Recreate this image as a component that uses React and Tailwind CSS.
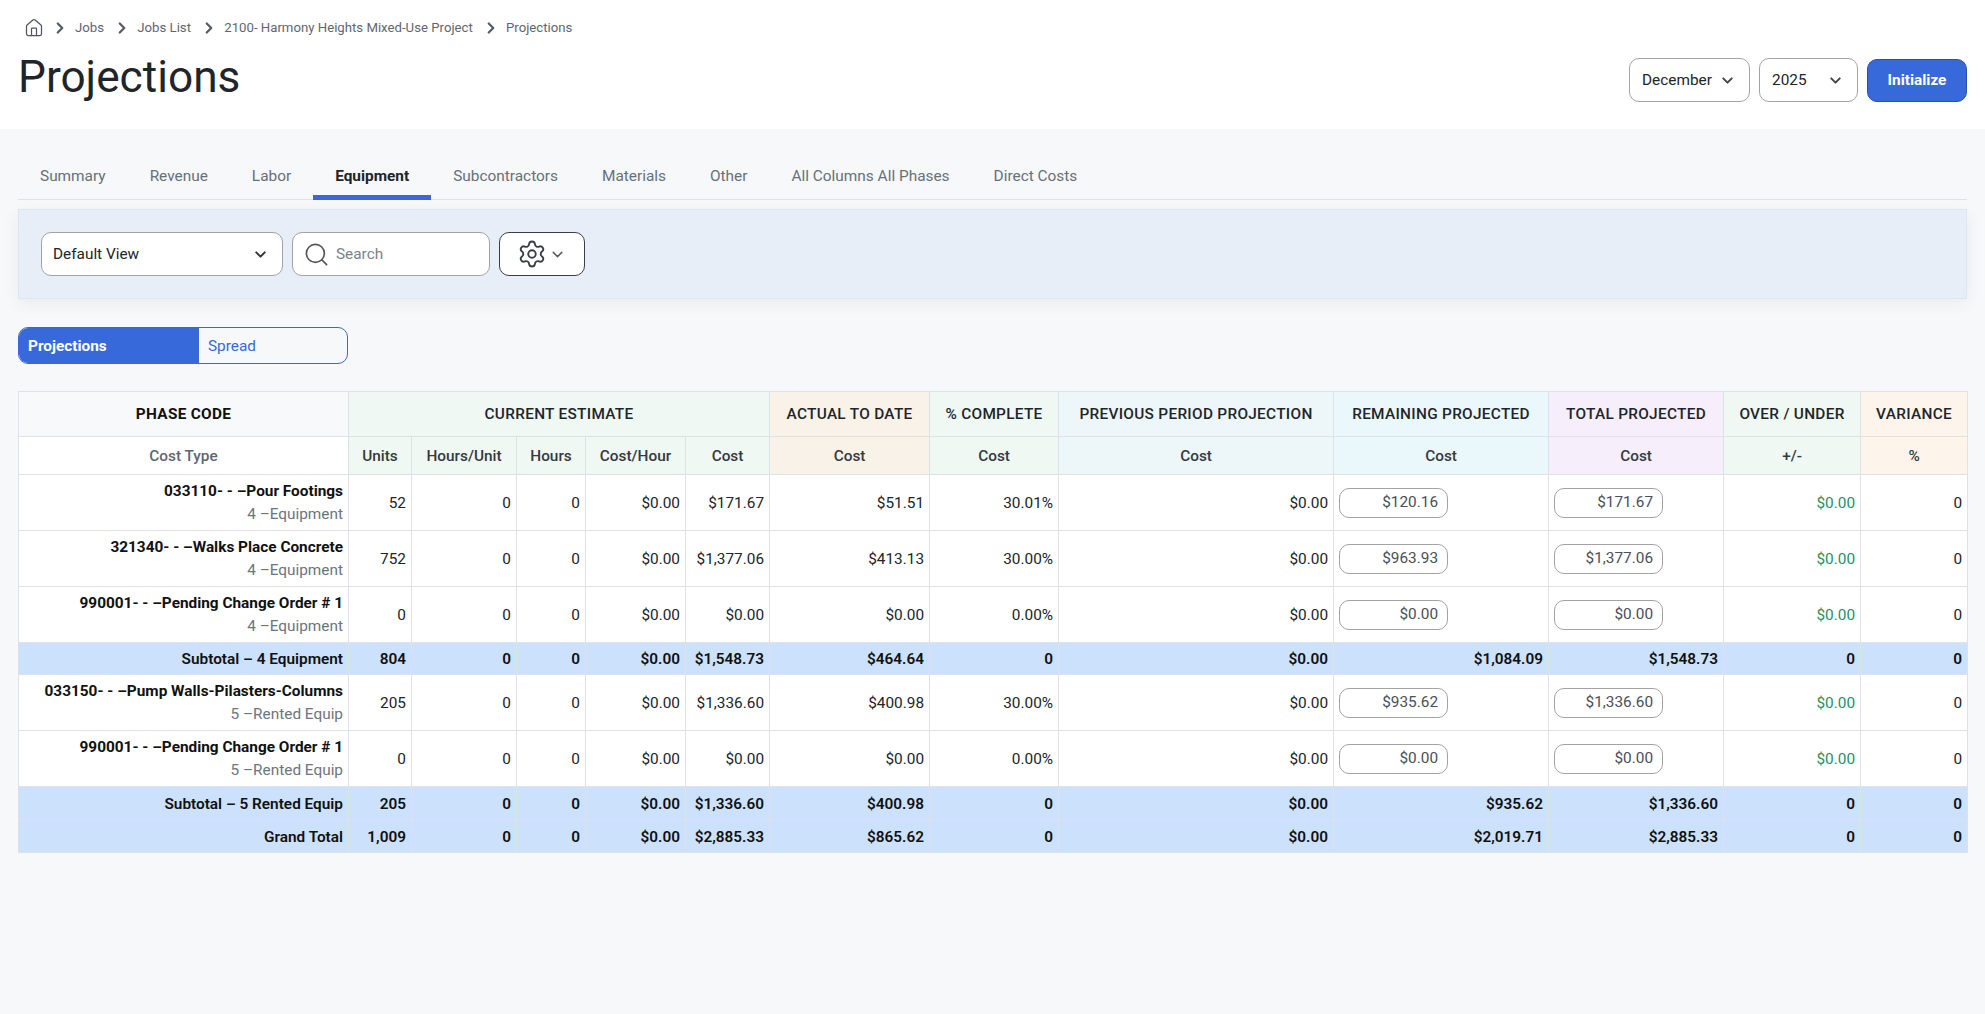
import React from "react";
import { ChevronDown, ChevronRight, House, Search, Settings } from "lucide-react";

const crumbs = ["Jobs", "Jobs List", "2100- Harmony Heights Mixed-Use Project", "Projections"];
const tabs = ["Summary", "Revenue", "Labor", "Equipment", "Subcontractors", "Materials", "Other", "All Columns All Phases", "Direct Costs"];

const rows = [
  { t: "row", name: "033110- - –Pour Footings", sub: "4 –Equipment", v: ["52", "0", "0", "$0.00", "$171.67", "$51.51", "30.01%", "$0.00", "$120.16", "$171.67"] },
  { t: "row", name: "321340- - –Walks Place Concrete", sub: "4 –Equipment", v: ["752", "0", "0", "$0.00", "$1,377.06", "$413.13", "30.00%", "$0.00", "$963.93", "$1,377.06"] },
  { t: "row", name: "990001- - –Pending Change Order # 1", sub: "4 –Equipment", v: ["0", "0", "0", "$0.00", "$0.00", "$0.00", "0.00%", "$0.00", "$0.00", "$0.00"] },
  { t: "sum", h: "h-[32px]", name: "Subtotal – 4 Equipment", v: ["804", "0", "0", "$0.00", "$1,548.73", "$464.64", "0", "$0.00", "$1,084.09", "$1,548.73", "0", "0"] },
  { t: "row", name: "033150- - –Pump Walls-Pilasters-Columns", sub: "5 –Rented Equip", v: ["205", "0", "0", "$0.00", "$1,336.60", "$400.98", "30.00%", "$0.00", "$935.62", "$1,336.60"] },
  { t: "row", name: "990001- - –Pending Change Order # 1", sub: "5 –Rented Equip", v: ["0", "0", "0", "$0.00", "$0.00", "$0.00", "0.00%", "$0.00", "$0.00", "$0.00"] },
  { t: "sum", h: "h-[33px]", name: "Subtotal – 5 Rented Equip", v: ["205", "0", "0", "$0.00", "$1,336.60", "$400.98", "0", "$0.00", "$935.62", "$1,336.60", "0", "0"] },
  { t: "sum", h: "h-[33px]", name: "Grand Total", v: ["1,009", "0", "0", "$0.00", "$2,885.33", "$865.62", "0", "$0.00", "$2,019.71", "$2,885.33", "0", "0"] },
];

const groupBase = "border border-[#dee2e6] text-[15.36px] tracking-[0.3px] uppercase text-center px-1 pt-[1px]";
const groupCls = groupBase + " font-medium text-[#212529]";
const subBase = "border border-[#dee2e6] text-[15.36px] font-medium text-center px-1 pt-[3px]";
const subCls = subBase + " text-[#343a40]";
const cell = "border border-[#dee2e6] text-right px-[5px] text-[15.36px] pt-[3px]";

function Box({ className, children }) {
  return <div className={"flex items-center bg-white border rounded-[10px] h-[44px] " + className}>{children}</div>;
}

function Input({ value }) {
  return (
    <div className="w-[109px] h-[30px] -mt-[3px] flex items-center justify-end pr-[9px] border border-[#a3a3a3] rounded-[10px] bg-white text-[#495057] text-[15.36px]">
      {value}
    </div>
  );
}

export default function App() {
  return (
    <div className="min-h-[1014px] bg-[#f6f8fa] text-[#212529] font-['Roboto',sans-serif]">
      <header className="bg-white h-[129px] px-[18px] flex justify-between">
        <div>
          <nav className="flex items-center h-[18px] mt-[19px] text-[13.2px] text-[#5f6670]">
            <House size={20} strokeWidth={1.5} className="ml-[6px] text-[#4f5661]" />
            {crumbs.map((c) => (
              <React.Fragment key={c}>
                <ChevronRight size={18} strokeWidth={3} className="mx-[6.5px] text-[#555b64]" />
                <span className="mr-[2.25px]">{c}</span>
              </React.Fragment>
            ))}
          </nav>
          <h1 className="text-[44.2px] leading-[52px] mt-[14px] font-normal text-[#212529]">Projections</h1>
        </div>
        <div className="flex items-start gap-[9px] pt-[58px]">
          <Box className="w-[121px] pl-[12px] pr-[13px] pt-[1px] justify-between text-[15.36px] border-[#a3a3a3]">
            December
            <ChevronDown size={17} strokeWidth={2.75} className="text-[#444]" />
          </Box>
          <Box className="w-[99px] pl-[12px] pr-[13px] pt-[1px] justify-between text-[15.36px] border-[#a3a3a3]">
            2025
            <ChevronDown size={17} strokeWidth={2.75} className="text-[#444]" />
          </Box>
          <button className="w-[100px] h-[43px] mt-[1px] bg-[#3869db] border border-[#2a50ae] rounded-[10px] text-white text-[15.36px] font-bold">
            Initialize
          </button>
        </div>
      </header>

      <main className="px-[18px]">
        <div className="flex h-[71px] pt-[26px] border-b border-[#dee2e6] text-[15.4px] text-[#667079]">
          {tabs.map((t) => (
            <div
              key={t}
              className={
                t === "Equipment"
                  ? "h-[45px] px-[22px] flex items-center border-b-[5px] pt-[4px] border-[#3869db] font-bold text-[#212529]"
                  : "h-[45px] px-[22px] flex items-center pb-[2px]"
              }
            >
              {t}
            </div>
          ))}
        </div>

        <section className="mt-[9px] h-[90px] bg-[#e7eef8] border border-[#dde6f3] shadow-[0_4px_16px_rgba(0,0,0,0.06)] flex items-center pl-[22px] gap-[9px] text-[15.36px]">
          <Box className="w-[242px] pl-[11px] pr-[13px] pt-[1px] justify-between border-[#a3a3a3]">
            Default View
            <ChevronDown size={17} strokeWidth={2.75} className="text-[#333]" />
          </Box>
          <Box className="w-[198px] pl-[10px] gap-[6px] pt-[1px] text-[#7c8289] border-[#a3a3a3]">
            <Search size={27} strokeWidth={1.5} className="text-[#555]" />
            Search
          </Box>
          <Box className="w-[86px] pl-[17px] gap-[2px] border-[#3a3f47]">
            <Settings size={30} strokeWidth={1.5} className="text-[#3a3f47]" />
            <ChevronDown size={17} strokeWidth={2} className="text-[#555]" />
          </Box>
        </section>

        <div className="mt-[28px] w-[330px] h-[37px] flex rounded-[10px] border border-[#3869db] overflow-hidden text-[15.36px]">
          <div className="w-[180px] bg-[#3869db] text-white font-bold flex items-center pl-[9px] pt-[2px]">Projections</div>
          <div className="flex-1 text-[#3869db] flex items-center pl-[9px] pt-[2px]">Spread</div>
        </div>

        <table className="mt-[27px] w-[1949px] table-fixed border-collapse text-[#212529]">
          <colgroup>
            <col className="w-[330px]" />
            <col className="w-[63px]" />
            <col className="w-[105px]" />
            <col className="w-[69px]" />
            <col className="w-[100px]" />
            <col className="w-[84px]" />
            <col className="w-[160px]" />
            <col className="w-[129px]" />
            <col className="w-[275px]" />
            <col className="w-[215px]" />
            <col className="w-[175px]" />
            <col className="w-[137px]" />
            <col className="w-[107px]" />
          </colgroup>
          <thead>
            <tr className="h-[45px]">
              <th className={groupBase + " bg-[#f8f9fa] font-bold text-[#111]"}>PHASE CODE</th>
              <th colSpan={5} className={groupCls + " bg-[#eff8f2]"}>CURRENT ESTIMATE</th>
              <th className={groupCls + " bg-[#f9f2e9]"}>ACTUAL TO DATE</th>
              <th className={groupCls + " bg-[#eff8f2]"}>% COMPLETE</th>
              <th className={groupCls + " bg-[#edf6f9]"}>PREVIOUS PERIOD PROJECTION</th>
              <th className={groupCls + " bg-[#ebf8fb]"}>REMAINING PROJECTED</th>
              <th className={groupCls + " bg-[#f6eefa]"}>TOTAL PROJECTED</th>
              <th className={groupCls + " bg-[#eff8f2]"}>OVER / UNDER</th>
              <th className={groupCls + " bg-[#fdf4ec]"}>VARIANCE</th>
            </tr>
            <tr className="h-[38px]">
              <th className={subBase + " bg-white text-[#5f6670]"}>Cost Type</th>
              <th className={subCls + " bg-[#eff8f2]"}>Units</th>
              <th className={subCls + " bg-[#eff8f2]"}>Hours/Unit</th>
              <th className={subCls + " bg-[#eff8f2]"}>Hours</th>
              <th className={subCls + " bg-[#eff8f2]"}>Cost/Hour</th>
              <th className={subCls + " bg-[#eff8f2]"}>Cost</th>
              <th className={subCls + " bg-[#f9f2e9]"}>Cost</th>
              <th className={subCls + " bg-[#eff8f2]"}>Cost</th>
              <th className={subCls + " bg-[#edf6f9]"}>Cost</th>
              <th className={subCls + " bg-[#ebf8fb]"}>Cost</th>
              <th className={subCls + " bg-[#f6eefa]"}>Cost</th>
              <th className={subCls + " bg-[#eff8f2]"}>+/-</th>
              <th className={subCls + " bg-[#fdf4ec]"}>%</th>
            </tr>
          </thead>
          <tbody>
            {rows.map((r, i) =>
              r.t === "row" ? (
                <tr key={i} className="h-[56px] bg-white">
                  <td className={cell}>
                    <div className="font-bold text-[#111] leading-[20px] -mt-[4px]">{r.name}</div>
                    <div className="text-[#6c757d] leading-[20px] mt-[3px]">{r.sub}</div>
                  </td>
                  {r.v.slice(0, 8).map((v, j) => (
                    <td key={j} className={cell}>{v}</td>
                  ))}
                  <td className={cell}><Input value={r.v[8]} /></td>
                  <td className={cell}><Input value={r.v[9]} /></td>
                  <td className={cell + " text-[#2a8f62]"}>$0.00</td>
                  <td className={cell}>0</td>
                </tr>
              ) : (
                <tr key={i} className={r.h + " bg-[#cce1fb] font-semibold text-[#111]"}>
                  <td className={cell}>{r.name}</td>
                  {r.v.map((v, j) => (
                    <td key={j} className={cell}>{v}</td>
                  ))}
                </tr>
              )
            )}
          </tbody>
        </table>
      </main>
    </div>
  );
}
